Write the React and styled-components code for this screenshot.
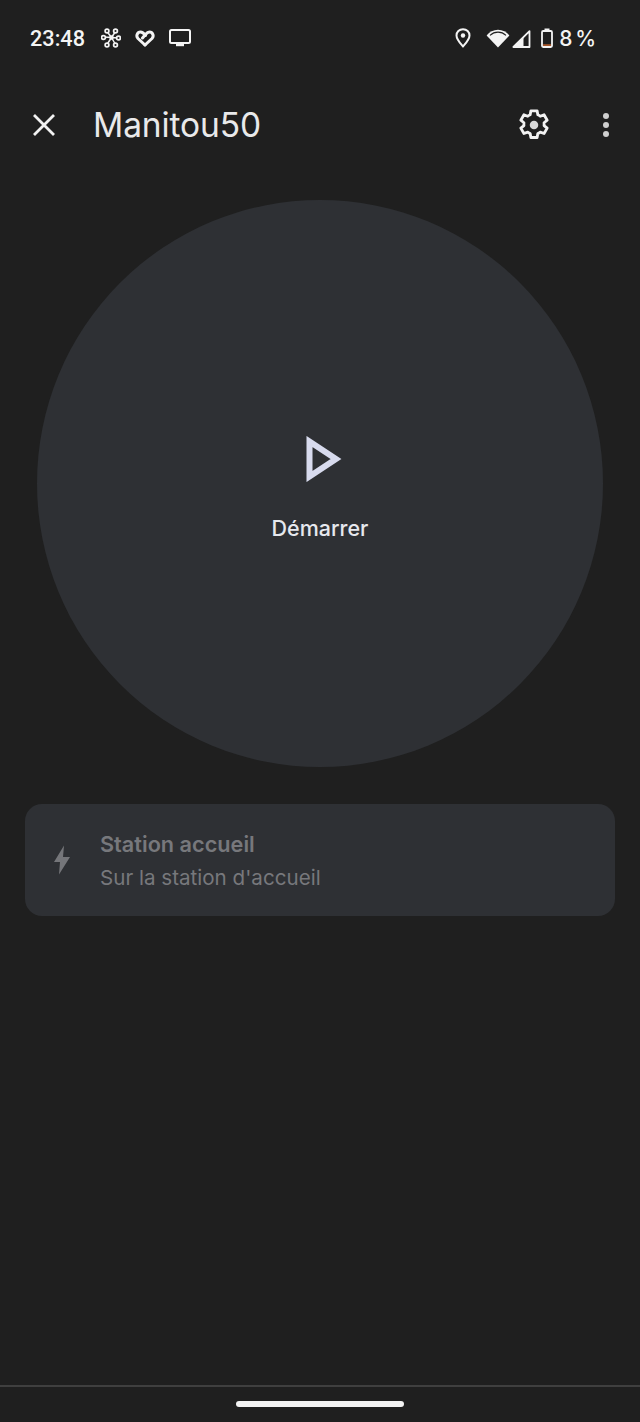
import React from "react";
import styled, { createGlobalStyle } from "styled-components";

const Global = createGlobalStyle`
  html, body { margin: 0; padding: 0; background: #1f1f1f; }
  * { box-sizing: border-box; }
`;
const Page = styled.div`
  width: 640px; height: 1422px; background: #1f1f1f; overflow: hidden;
  display: flex; flex-direction: column; font-family: Inter, Roboto, sans-serif; color: #fff;
`;
const StatusBar = styled.div`
  height: 76px; padding: 0 44px 0 30px; display: flex; align-items: center; justify-content: space-between;
`;
const StatusGroup = styled.div`display: flex; align-items: center;`;
const Time = styled.span`font-family: Roboto, sans-serif; font-size: 21.700px; font-weight: 500; color: #f4f4f4; margin-right: 16px;`;
const StatusIcon = styled.span`display: flex; margin-left: ${p => p.$ml || 0}px;`;
const Percent = styled.span`font-family: Inter, sans-serif; font-size: 21px; font-weight: 500; word-spacing: -3px; color: #f4f4f4; margin-left: 6px;`;
const Header = styled.div`
  height: 98px; padding: 0 30px 0 31px; display: flex; align-items: center;
`;
const Title = styled.h1`
  flex: 1; margin: 0 0 0 36px; font-family: Inter, sans-serif; font-size: 33.500px; font-weight: 400; color: #e9e9ea; letter-spacing: -.1px;
`;
const Main = styled.div`flex: 1; padding: 26px 25px 0; display: flex; flex-direction: column; align-items: center;`;
const Circle = styled.button`
  width: 566px; height: 567px; border: 0; border-radius: 50%; background: #2e3034; padding: 10px 0 0; color: #e8eaed;
  display: flex; flex-direction: column; align-items: center; justify-content: center; gap: 33px; font-family: inherit;
`;
const PlayWrap = styled.span`display: flex; margin-left: 8px;`;
const CircleLabel = styled.span`font-size: 21.500px; font-weight: 500; color: #e6e8ee;`;
const Card = styled.div`
  align-self: stretch; margin-top: 37px; height: 112px; border-radius: 17px; background: #2e3034;
  display: flex; align-items: center; padding-left: 28px;
`;
const CardText = styled.div`margin-left: 29px; display: flex; flex-direction: column; gap: 8px;`;
const CardTitle = styled.div`font-size: 21.700px; font-weight: 600; color: #77787c;`;
const CardSub = styled.div`font-size: 20.600px; font-weight: 400; color: #77787c;`;
const NavBar = styled.div`
  height: 37px; border-top: 2px solid #3f3f3f; display: flex; justify-content: center; padding-top: 14px;
`;
const Pill = styled.div`width: 168px; height: 6px; border-radius: 3px; background: #f2f2f2;`;
const IconBtn = styled.div`display: flex; align-items: center; justify-content: center; width: ${p => p.$w}px; margin-left: ${p => p.$ml || 0}px;`;

const Cluster = () => (
  <svg width="20" height="20" viewBox="0 0 20 20" fill="none" stroke="#f4f4f4" strokeWidth="1.700">
    <path d="M10.500 9.500 6 3.500M10.500 9.500l4-6M10.500 9.500 2.500 9M10.500 9.500l7 .5M10.500 9.500l-4.500 7M10.500 9.500l4 7" strokeWidth="1.500" />
    <circle cx="10.500" cy="9.500" r="2.300" fill="#f4f4f4" stroke="none" />
    <circle cx="6" cy="3" r="1.900" fill="#1f1f1f" /><circle cx="14.500" cy="3" r="1.900" fill="#1f1f1f" />
    <circle cx="2.500" cy="9.500" r="1.900" fill="#1f1f1f" /><circle cx="17.500" cy="10" r="1.900" fill="#1f1f1f" />
    <circle cx="6" cy="17" r="1.900" fill="#1f1f1f" /><circle cx="14.500" cy="17" r="1.900" fill="#1f1f1f" />
  </svg>
);
const Heart = () => (
  <svg width="20" height="18" viewBox="0 0 20 18" fill="none" stroke="#f4f4f4" strokeWidth="3" strokeLinejoin="round" strokeLinecap="round">
    <path d="M10 16 3 9.500C.6 7 2.400 3 5.500 3 7.500 3 9 4.500 10.500 6.500" />
    <path d="M10 16l7-6.500C19.400 7 17.600 3 14.500 3c-1.700 0-2.800 1-4 2.500L7.500 9" />
  </svg>
);
const Tv = () => (
  <svg width="22" height="18" viewBox="0 0 22 18" fill="none">
    <rect x="1" y="1" width="20" height="13" rx="1.500" stroke="#f4f4f4" strokeWidth="2" />
    <rect x="7" y="15" width="8" height="2.200" fill="#f4f4f4" />
  </svg>
);
const Pin = () => (
  <svg width="16" height="20" viewBox="0 0 16 20" fill="none">
    <path d="M8 1.200C4.200 1.200 1.500 4 1.500 7.500 1.500 11.500 5.500 15.500 8 18.500c2.500-3 6.500-7 6.500-11C14.500 4 11.800 1.200 8 1.200Z" stroke="#f4f4f4" strokeWidth="2" strokeLinejoin="round" />
    <circle cx="8" cy="7.500" r="2.200" fill="#f4f4f4" />
  </svg>
);
const Wifi = () => (
  <svg width="24" height="19" viewBox="0 0 24 19">
    <path d="M12 18.500.6 6.500C3.500 3 7.500 .8 12 .8s8.500 2.200 11.400 5.700L12 18.500Z" fill="#f4f4f4" />
    <path d="M4 6.400C6.200 4.300 8.900 3.100 12 3.100s5.800 1.200 8 3.300" stroke="#1f1f1f" strokeWidth="1.100" fill="none" />
  </svg>
);
const Signal = () => (
  <svg width="20" height="19" viewBox="0 0 20 19" fill="none">
    <path d="M18.500 2.200V18H2.400L18.500 2.200Z" stroke="#f4f4f4" strokeWidth="1.800" strokeLinejoin="round" />
    <path d="M12.500 8V18H2.400Z" fill="#f4f4f4" />
  </svg>
);
const Battery = () => (
  <svg width="12" height="20" viewBox="0 0 12 20" fill="none">
    <rect x="1" y="3" width="10" height="16" rx="1.200" stroke="#f4f4f4" strokeWidth="1.800" />
    <rect x="3.500" y="0.500" width="5" height="2.500" fill="#f4f4f4" />
    <rect x="2" y="16.200" width="8" height="1.800" fill="#a6562a" />
  </svg>
);
const Close = () => (
  <svg width="26" height="26" viewBox="0 0 26 26" stroke="#f2f2f2" strokeWidth="2.800">
    <path d="M3 3l20 20M23 3 3 23" />
  </svg>
);
const Gear = () => (
  <svg width="34" height="34" viewBox="0 0 24 24" fill="none" stroke="#f2f2f2" strokeWidth="2" strokeLinejoin="round">
    <path d="M9.800 2h4.400l.5 2.800c.6.250 1.200.6 1.700 1l2.700-1 2.200 3.800-2.200 1.800a7 7 0 0 1 0 2l2.200 1.800-2.200 3.800-2.700-1c-.5.400-1.100.75-1.700 1l-.5 2.800H9.800l-.5-2.800a7 7 0 0 1-1.700-1l-2.700 1-2.200-3.800 2.200-1.800a7 7 0 0 1 0-2L2.700 8.600l2.200-3.800 2.700 1c.5-.4 1.100-.75 1.700-1L9.800 2Z" />
    <circle cx="12" cy="12" r="3" fill="#d8d8d8" stroke="none" />
  </svg>
);
const Dots = () => (
  <svg width="8" height="28" viewBox="0 0 8 28" fill="#cfcfcf">
    <circle cx="4" cy="5" r="3" /><circle cx="4" cy="14" r="3" /><circle cx="4" cy="23" r="3" />
  </svg>
);
const Play = () => (
  <svg width="36" height="46" viewBox="0 0 36 46" fill="none">
    <path d="M3.500 5.500 30 23 3.500 40.500V5.500Z" stroke="#d8dbee" strokeWidth="6" strokeLinejoin="miter" />
  </svg>
);
const Bolt = () => (
  <svg width="18" height="30" viewBox="0 0 18 30">
    <path d="M11 .5 1 17h6l-1 12.500L17 12h-7l1-11.500Z" fill="#75767a" />
  </svg>
);

export default function App() {
  return (
    <Page>
      <Global />
      <StatusBar>
        <StatusGroup>
          <Time>23:48</Time>
          <StatusIcon><Cluster /></StatusIcon>
          <StatusIcon $ml={14}><Heart /></StatusIcon>
          <StatusIcon $ml={14}><Tv /></StatusIcon>
        </StatusGroup>
        <StatusGroup>
          <StatusIcon><Pin /></StatusIcon>
          <StatusIcon $ml={15}><Wifi /></StatusIcon>
          <StatusIcon $ml={1}><Signal /></StatusIcon>
          <StatusIcon $ml={10}><Battery /></StatusIcon>
          <Percent>8 %</Percent>
        </StatusGroup>
      </StatusBar>
      <Header>
        <Close />
        <Title>Manitou50</Title>
        <IconBtn $w={34}><Gear /></IconBtn>
        <IconBtn $w={8} $ml={51}><Dots /></IconBtn>
      </Header>
      <Main>
        <Circle>
          <PlayWrap><Play /></PlayWrap>
          <CircleLabel>Démarrer</CircleLabel>
        </Circle>
        <Card>
          <Bolt />
          <CardText>
            <CardTitle>Station accueil</CardTitle>
            <CardSub>Sur la station d'accueil</CardSub>
          </CardText>
        </Card>
      </Main>
      <NavBar><Pill /></NavBar>
    </Page>
  );
}
